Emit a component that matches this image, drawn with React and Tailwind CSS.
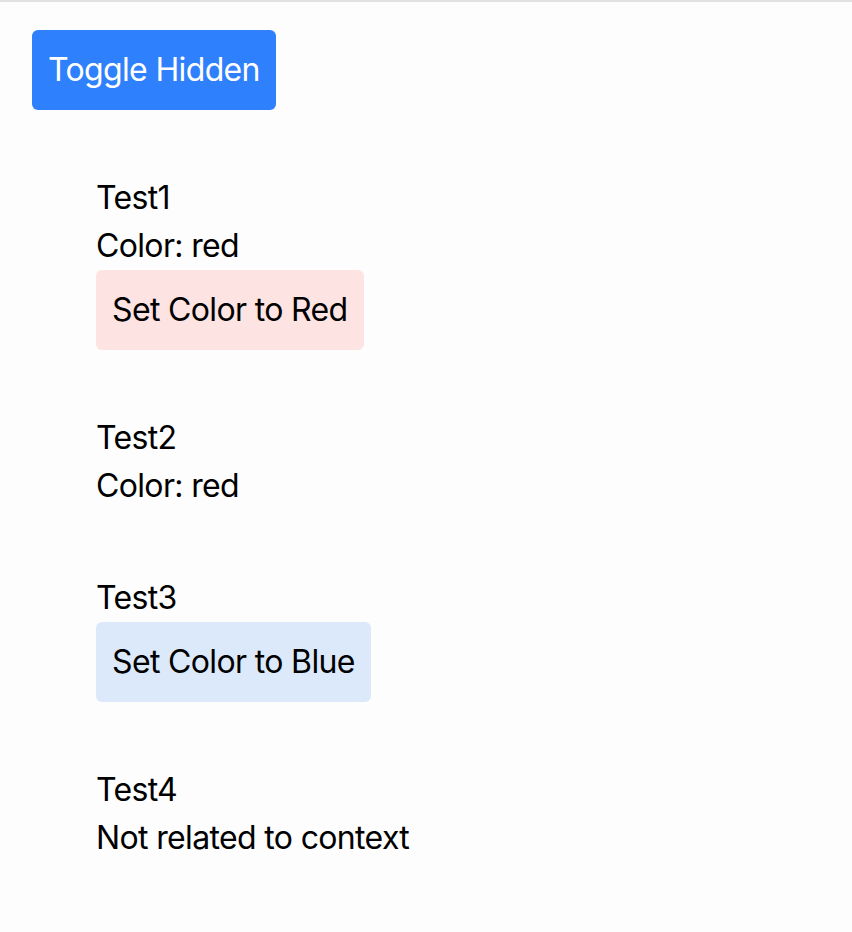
export default function App() {
  return (
    <div className="min-h-[932px] bg-[#fdfdfd] border-t-2 border-[#e1e1e1] px-8 pt-[28px] text-[32px] leading-[48px] tracking-[-0.65px] text-black font-['Inter',sans-serif]">
      <button className="px-4 py-4 rounded-md bg-[#2f80fc] text-white leading-[48px] tracking-[-0.65px]">
        Toggle Hidden
      </button>

      <div className="mt-16 ml-16 flex flex-col gap-16">
        <div className="flex flex-col items-start">
          <div>Test1</div>
          <div>Color: red</div>
          <button className="px-4 py-4 rounded-md bg-[#fde3e2] leading-[48px] tracking-[-0.65px]">Set Color to Red</button>
        </div>

        <div className="flex flex-col items-start">
          <div>Test2</div>
          <div>Color: red</div>
        </div>

        <div className="flex flex-col items-start">
          <div>Test3</div>
          <button className="px-4 py-4 rounded-md bg-[#dbe9fa] leading-[48px] tracking-[-0.65px]">Set Color to Blue</button>
        </div>

        <div className="flex flex-col items-start">
          <div>Test4</div>
          <div>Not related to context</div>
        </div>
      </div>
    </div>
  );
}
